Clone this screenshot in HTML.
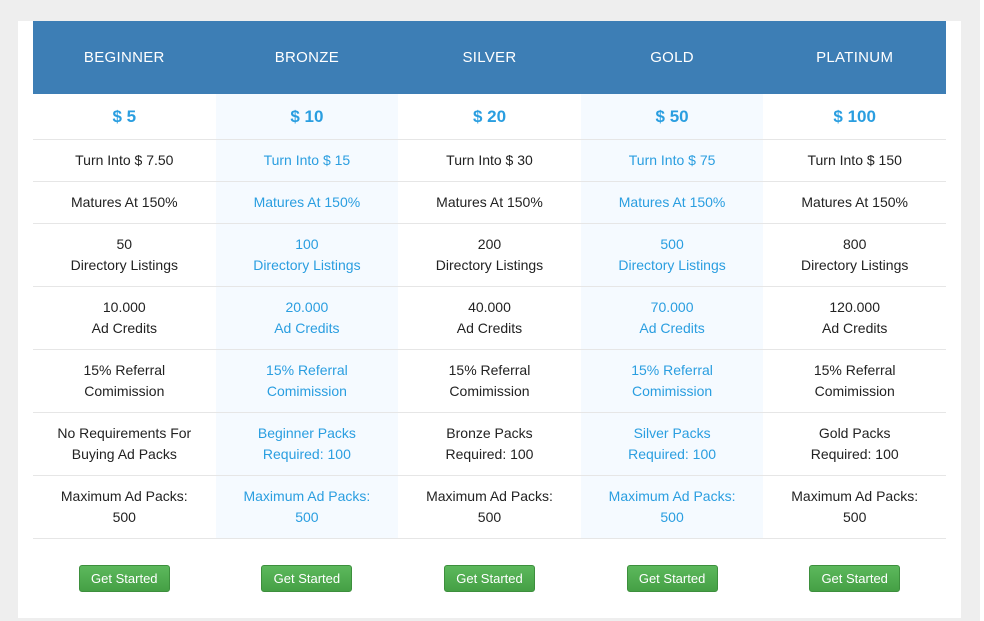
<!DOCTYPE html><html><head><style>
body{margin:0;background:#eeeeee;width:984px;height:621px;overflow:hidden;font-family:"Liberation Sans",Arial,sans-serif;position:relative}
.edge{position:absolute;left:980px;top:0;width:4px;height:621px;background:#fff}
.panel{position:absolute;left:18px;top:21px;width:943px;height:597px;background:#fff}
table{position:absolute;left:15px;top:0;width:913px;border-collapse:collapse;table-layout:fixed}
td,th{text-align:center;font-size:14px;line-height:21px;color:#222;padding:0;border-bottom:1px solid #e6e6e6}
th{background:#3d7eb5;color:#fff;font-weight:normal;font-size:15px;height:73px;border:none;letter-spacing:.3px}
td.alt{background:#f5faff;color:#2a9ee0}
tr.p td{font-size:17px;font-weight:bold;color:#2a9ee0;height:45px}
tr.s td{height:41px}
tr.d td{height:62px}
tr.b td{border:none;height:79px;vertical-align:top}
.btn{display:inline-block;width:91px;height:27px;line-height:26px;border-radius:3px;background:linear-gradient(#5cb85c,#45a045);border:1px solid #3d8f3d;box-sizing:border-box;color:#fff;font-size:13px;margin-top:26px}
</style></head><body><div class="edge"></div><div class="panel"><table>
<tr><th>BEGINNER</th><th>BRONZE</th><th>SILVER</th><th>GOLD</th><th>PLATINUM</th></tr>
<tr class="p"><td>$ 5</td><td class="alt">$ 10</td><td>$ 20</td><td class="alt">$ 50</td><td>$ 100</td></tr>
<tr class="s"><td>Turn Into $ 7.50</td><td class="alt">Turn Into $ 15</td><td>Turn Into $ 30</td><td class="alt">Turn Into $ 75</td><td>Turn Into $ 150</td></tr>
<tr class="s"><td>Matures At 150%</td><td class="alt">Matures At 150%</td><td>Matures At 150%</td><td class="alt">Matures At 150%</td><td>Matures At 150%</td></tr>
<tr class="d"><td>50<br>Directory Listings</td><td class="alt">100<br>Directory Listings</td><td>200<br>Directory Listings</td><td class="alt">500<br>Directory Listings</td><td>800<br>Directory Listings</td></tr>
<tr class="d"><td>10.000<br>Ad Credits</td><td class="alt">20.000<br>Ad Credits</td><td>40.000<br>Ad Credits</td><td class="alt">70.000<br>Ad Credits</td><td>120.000<br>Ad Credits</td></tr>
<tr class="d"><td>15% Referral<br>Comimission</td><td class="alt">15% Referral<br>Comimission</td><td>15% Referral<br>Comimission</td><td class="alt">15% Referral<br>Comimission</td><td>15% Referral<br>Comimission</td></tr>
<tr class="d"><td>No Requirements For<br>Buying Ad Packs</td><td class="alt">Beginner Packs<br>Required: 100</td><td>Bronze Packs<br>Required: 100</td><td class="alt">Silver Packs<br>Required: 100</td><td>Gold Packs<br>Required: 100</td></tr>
<tr class="d"><td>Maximum Ad Packs:<br>500</td><td class="alt">Maximum Ad Packs:<br>500</td><td>Maximum Ad Packs:<br>500</td><td class="alt">Maximum Ad Packs:<br>500</td><td>Maximum Ad Packs:<br>500</td></tr>
<tr class="b"><td><span class="btn">Get Started</span></td><td><span class="btn">Get Started</span></td><td><span class="btn">Get Started</span></td><td><span class="btn">Get Started</span></td><td><span class="btn">Get Started</span></td></tr>
</table></div></body></html>
